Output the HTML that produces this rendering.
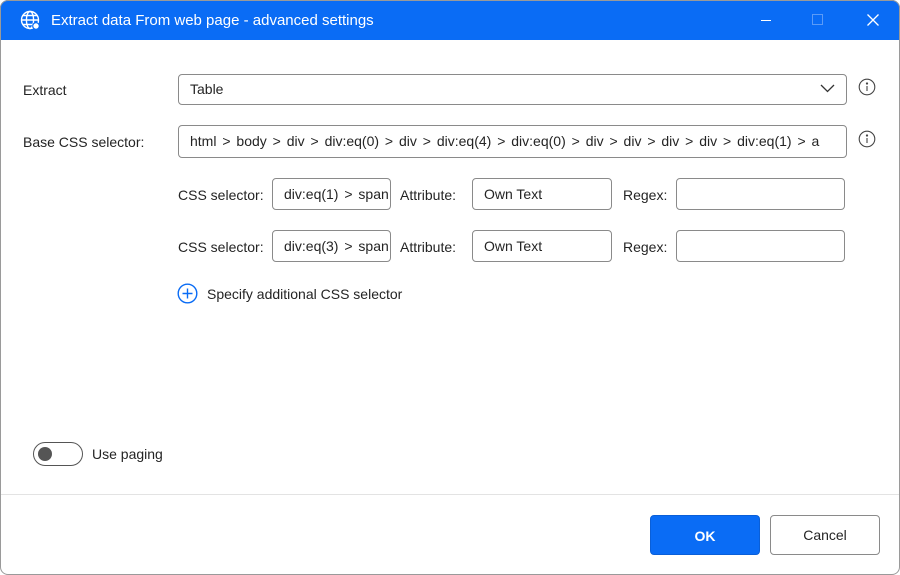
<!DOCTYPE html>
<html><head><meta charset="utf-8">
<style>
*{box-sizing:border-box;margin:0;padding:0}
html,body{width:900px;height:575px;background:#fff;overflow:hidden;font-family:"Liberation Sans",sans-serif;font-size:14px;color:#242424}
.win{position:absolute;left:0;top:0;width:900px;height:575px;border-radius:8px;overflow:hidden;background:#fff}
.frame{position:absolute;left:0;top:0;width:900px;height:575px;border:1px solid #9a9a9a;border-radius:8px;pointer-events:none}
.title{position:absolute;left:0;top:0;width:900px;height:40px;background:#0a6cf5;color:#fff}
.c{position:absolute;left:1px;top:1px;width:900px;height:575px}
.a{position:absolute}
.lbl{position:absolute;line-height:20px}
.inp{position:absolute;border:1px solid #8a8a8a;border-radius:4px;background:#fff;line-height:20px;padding:4px 11px;white-space:nowrap;overflow:hidden}
.ws{word-spacing:2px}
.btn{position:absolute;border-radius:4px;text-align:center;font-size:14px}
</style></head><body>
<div class="win">
<div class="title">
 <svg class="a" style="left:20px;top:10px" width="21" height="21" viewBox="0 0 21 21" fill="none" stroke="#fff" stroke-width="1.4">
  <circle cx="10" cy="10" r="8.5"/><ellipse cx="10" cy="10" rx="3.6" ry="8.5"/><path d="M1.5 10h17M3 5.5h14M3 14.5h14"/>
  <circle cx="16" cy="16" r="3.3" fill="#fff" stroke="#0a6cf5" stroke-width="1.2"/>
 </svg>
 <div class="a" style="left:51px;top:11px;font-size:15px;line-height:19px">Extract data From web page - advanced settings</div>
 <div class="a" style="left:761px;top:20px;width:10px;height:1px;background:#fff"></div>
 <div class="a" style="left:812px;top:14px;width:11px;height:11px;border:1px solid #5b9bf7"></div>
 <svg class="a" style="left:867px;top:14px" width="12" height="12" viewBox="0 0 12 12" stroke="#fff" stroke-width="1.3"><path d="M0.5 0.5l11 11M11.5 0.5l-11 11"/></svg>
</div>
<div class="c">
<div class="lbl" style="left:22px;top:79px">Extract</div>
<div class="inp" style="left:177px;top:73px;width:669px;height:31px">Table</div>
<svg class="a" style="left:819px;top:83px" width="15" height="9" viewBox="0 0 15 9" fill="none" stroke="#333" stroke-width="1.3"><path d="M1 1l6.5 6.5L14 1"/></svg>
<svg class="a" style="left:857px;top:77px" width="18" height="18" viewBox="0 0 18 18" fill="none" stroke="#444" stroke-width="1.1"><circle cx="9" cy="9" r="7.8"/><path d="M9 8v5"/><circle cx="9" cy="5.5" r=".6" fill="#444"/></svg>

<div class="lbl" style="left:22px;top:131px">Base CSS selector:</div>
<div class="inp ws" style="left:177px;top:124px;width:669px;height:33px;padding-top:5px">html &gt; body &gt; div &gt; div:eq(0) &gt; div &gt; div:eq(4) &gt; div:eq(0) &gt; div &gt; div &gt; div &gt; div &gt; div:eq(1) &gt; a</div>
<svg class="a" style="left:857px;top:129px" width="18" height="18" viewBox="0 0 18 18" fill="none" stroke="#444" stroke-width="1.1"><circle cx="9" cy="9" r="7.8"/><path d="M9 8v5"/><circle cx="9" cy="5.5" r=".6" fill="#444"/></svg>

<div class="lbl" style="left:177px;top:184px">CSS selector:</div>
<div class="inp ws" style="left:271px;top:177px;width:119px;height:32px;padding-top:5px">div:eq(1) &gt; span</div>
<div class="lbl" style="left:399px;top:184px">Attribute:</div>
<div class="inp" style="left:471px;top:177px;width:140px;height:32px;padding-top:5px">Own Text</div>
<div class="lbl" style="left:622px;top:184px">Regex:</div>
<div class="inp" style="left:675px;top:177px;width:169px;height:32px"></div>

<div class="lbl" style="left:177px;top:236px">CSS selector:</div>
<div class="inp ws" style="left:271px;top:229px;width:119px;height:32px;padding-top:5px">div:eq(3) &gt; span</div>
<div class="lbl" style="left:399px;top:236px">Attribute:</div>
<div class="inp" style="left:471px;top:229px;width:140px;height:32px;padding-top:5px">Own Text</div>
<div class="lbl" style="left:622px;top:236px">Regex:</div>
<div class="inp" style="left:675px;top:229px;width:169px;height:32px"></div>

<svg class="a" style="left:176px;top:282px" width="21" height="21" viewBox="0 0 21 21" fill="none" stroke="#0a6cf5" stroke-width="1.4"><circle cx="10.5" cy="10.5" r="9.3"/><path d="M10.5 5.5v10M5.5 10.5h10"/></svg>
<div class="lbl" style="left:206px;top:283px">Specify additional CSS selector</div>

<div class="a" style="left:32px;top:441px;width:50px;height:24px;border:1px solid #555;border-radius:12px"></div>
<div class="a" style="left:37px;top:446px;width:14px;height:14px;border-radius:50%;background:#555"></div>
<div class="lbl" style="left:91px;top:443px">Use paging</div>

<div class="a" style="left:-1px;top:493px;width:900px;height:1px;background:#e3e3e3"></div>
<div class="btn" style="left:649px;top:514px;width:110px;height:40px;background:#0a6cf5;color:#fff;font-weight:bold;line-height:40px;border:1px solid #0a5fd8">OK</div>
<div class="btn" style="left:769px;top:514px;width:110px;height:40px;background:#fff;border:1px solid #8a8a8a;line-height:38px">Cancel</div>
</div>
</div>
<div class="frame"></div>
</body></html>
